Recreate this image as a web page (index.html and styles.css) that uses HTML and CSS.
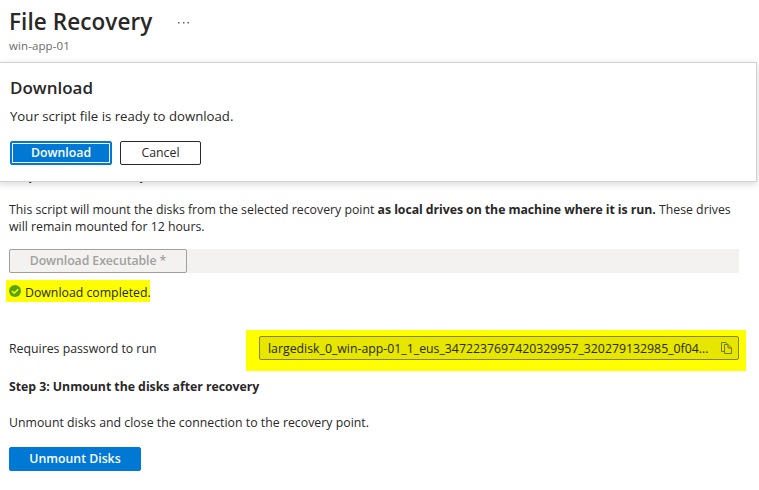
FILE: index.html
```
<!DOCTYPE html>
<html lang="en">
<head>
<meta charset="utf-8">
<title>File Recovery</title>
<link rel="stylesheet" href="styles.css">
</head>
<body>
<header class="page-head">
  <div class="title-row">
    <h1 class="title">File Recovery</h1>
    <svg class="more" viewBox="0 0 13 3"><path d="M1 1h1.500v1.500H1zM6 1h1.500v1.500H6zM10.500 1h1.500v1.500h-1.500z" fill="#605e5c"/></svg>
  </div>
  <p class="subtitle">win-app-01</p>
</header>
<section class="dialog">
  <h2 class="dialog-title">Download</h2>
  <p class="dialog-text">Your script file is ready to download.</p>
  <div class="actions">
    <button class="btn primary focused">Download</button>
    <button class="btn cancel">Cancel</button>
  </div>
</section>
<main class="content">
  <h3 class="step step-two">Step 2: Download script to browse and recover files</h3>
  <p class="intro">This script will mount the disks from the selected recovery point <b>as local drives on the machine where it is run.</b> These drives<br>will remain mounted for 12 hours.</p>
  <div class="exec-bar"><button class="btn exec" disabled>Download Executable *</button></div>
  <div class="status">
    <svg class="check" viewBox="0 0 12 12"><circle cx="6" cy="6" r="6" fill="#57a300"/><path d="M3 6 5.200 8.200 9.200 4.200" fill="none" stroke="#ff0" stroke-width="1.500"/></svg>
    <span>Download completed.</span>
  </div>
  <div class="password-row">
    <span class="label">Requires password to run</span>
    <div class="marker">
      <div class="field">
        <span class="secret">largedisk_0_win-app-01_1_eus_3472237697420329957_320279132985_0f04...</span>
        <svg class="copy" viewBox="0 0 11 12"><path d="M3 9.500H.5V.5H5L6.500 2M3.500 2.500H7L10.500 6v5.500h-7zM7 2.500V6h3.500" fill="none" stroke="#77770a" stroke-width="1"/></svg>
      </div>
    </div>
  </div>
  <h3 class="step step-three">Step 3: Unmount the disks after recovery</h3>
  <p class="unmount-text">Unmount disks and close the connection to the recovery point.</p>
  <button class="btn primary unmount">Unmount Disks</button>
</main>
</body>
</html>
```
FILE: styles.css
```
* { box-sizing: border-box; }
body { margin: 0; height: 490px; overflow: hidden; background: #fff; color: #292827; font: 12.3px/17px "Open Sans", "Noto Sans", sans-serif; }
h1, h2, h3, p { margin: 0; }

.page-head { height: 167px; padding: 7px 9px; }
.title-row { display: flex; align-items: center; gap: 25px; }
.title { font-size: 22.5px; line-height: 30px; font-weight: 600; letter-spacing: .08px; }
.more { width: 13px; height: 3px; }
.subtitle { font-size: 11.5px; line-height: 18px; letter-spacing: .1px; color: #6b6967; }

.dialog { position: absolute; left: -1px; top: 62px; width: 758px; height: 120px; padding: 13px 10px; background: #fff; border: 1px solid #d2d2d2; box-shadow: 0 2px 7px rgba(0, 0, 0, .16); }
.dialog-title { font-size: 17px; line-height: 24px; font-weight: 600; }
.dialog-text { margin-top: 8px; font-size: 13.2px; }
.actions { display: flex; gap: 8px; margin-top: 16px; }

.btn { display: block; height: 24px; padding: 0; border: 1px solid #292827; border-radius: 2px; background: #fff; color: #292827; font: 600 12.3px/20px "Open Sans", "Noto Sans", sans-serif; }
.primary { background: #0078d4; border-color: #0078d4; color: #fff; }
.focused { width: 102px; box-shadow: inset 0 0 0 1px #0078d4, inset 0 0 0 2px #fff; }
.cancel { width: 81px; font-weight: 500; }

.content { padding: 0 9px; }
.step { font-size: 12.3px; line-height: 17px; font-weight: 700; letter-spacing: -.03px; }
.intro { margin-top: 17px; white-space: nowrap; }
.intro b { letter-spacing: -.06px; }
.exec-bar { width: 730px; margin-top: 14px; background: #f3f2f1; }
.exec { width: 178px; border-color: #a19f9d; background: #f3f2f1; color: #a19f9d; letter-spacing: -.07px; }

.status { display: flex; align-items: center; gap: 4px; width: 144px; height: 22px; margin: 7px 0 0 -3px; padding: 2px 0 0 3px; background: #ff0; white-space: nowrap; }
.check { width: 12px; height: 12px; flex: none; margin-top: -3px; }

.password-row { display: flex; justify-content: space-between; width: 737px; margin-top: 28px; }
.label { line-height: 38px; }
.marker { width: 500px; height: 41px; padding: 6px 7px 11px 13px; background: #ff0; }
.field { display: flex; align-items: center; justify-content: space-between; height: 24px; padding: 0 6px 0 8px; border: 1px solid #85850a; border-radius: 2px; background: #e6e600; color: #292805; }
.copy { width: 11px; height: 12px; flex: none; }

.step-three { margin-top: 7px; }
.unmount-text { margin-top: 19px; letter-spacing: .015px; }
.unmount { width: 132px; margin-top: 16px; }
```
